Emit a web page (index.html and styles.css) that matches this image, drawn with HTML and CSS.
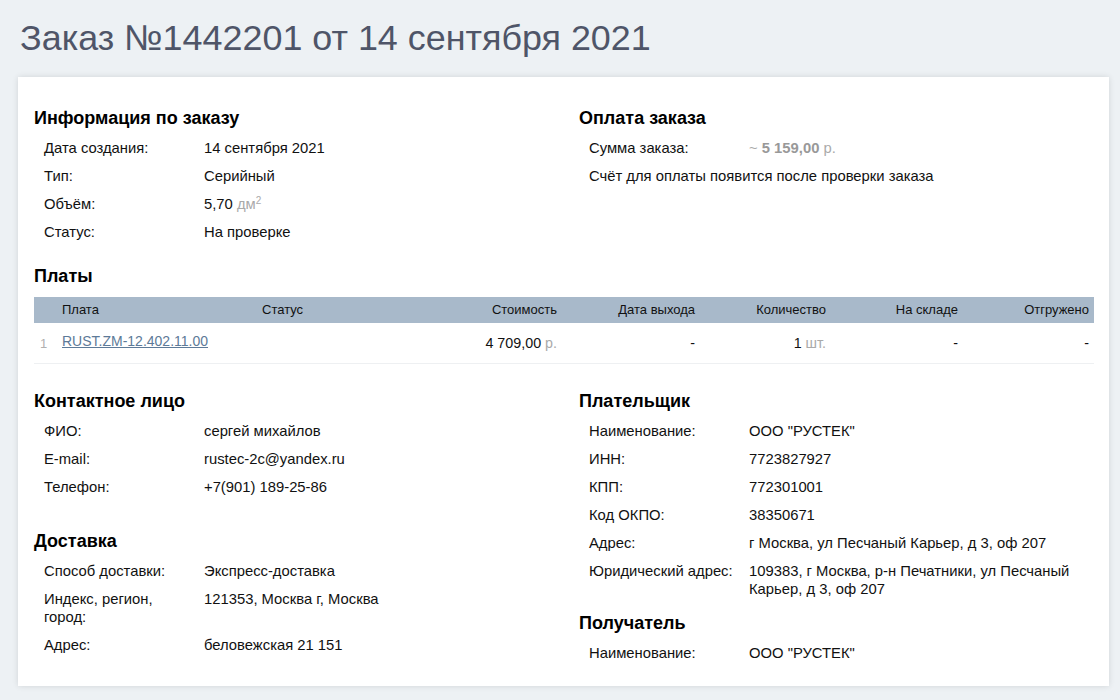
FILE: index.html
```html
<!DOCTYPE html>
<html lang="ru">
<head>
<meta charset="utf-8">
<title>Заказ №1442201</title>
<link rel="stylesheet" href="styles.css">
</head>
<body>
<h1 class="page-title">Заказ №1442201 от 14 сентября 2021</h1>
<div class="card">
  <div class="cols top-cols">
    <section class="section">
      <h2 class="sec-title">Информация по заказу</h2>
      <div class="row"><div class="lbl">Дата создания:</div><div class="val">14 сентября 2021</div></div>
      <div class="row"><div class="lbl">Тип:</div><div class="val">Серийный</div></div>
      <div class="row"><div class="lbl">Объём:</div><div class="val">5,70 <span class="muted">дм<sup class="sup">2</sup></span></div></div>
      <div class="row"><div class="lbl">Статус:</div><div class="val">На проверке</div></div>
    </section>
    <section class="section">
      <h2 class="sec-title">Оплата заказа</h2>
      <div class="row"><div class="lbl">Сумма заказа:</div><div class="val muted">~ <b>5 159,00</b> р.</div></div>
      <div class="row"><div class="note">Счёт для оплаты появится после проверки заказа</div></div>
    </section>
  </div>

  <section class="boards">
    <h2 class="sec-title">Платы</h2>
    <table class="tbl">
      <colgroup>
        <col class="c-num"><col class="c-name"><col class="c-status"><col class="c-cost"><col class="c-date"><col class="c-qty"><col class="c-stock"><col class="c-ship">
      </colgroup>
      <thead>
        <tr><th></th><th class="l">Плата</th><th class="l st">Статус</th><th>Стоимость</th><th>Дата выхода</th><th>Количество</th><th>На складе</th><th>Отгружено</th></tr>
      </thead>
      <tbody>
        <tr><td class="l num">1</td><td class="l"><a class="link" href="#">RUST.ZM-12.402.11.00</a></td><td></td><td>4 709,00 <span class="muted">р.</span></td><td>-</td><td>1 <span class="muted">шт.</span></td><td>-</td><td>-</td></tr>
      </tbody>
    </table>
  </section>

  <div class="cols bottom-cols">
    <div class="col">
      <section class="section">
        <h2 class="sec-title">Контактное лицо</h2>
        <div class="row"><div class="lbl">ФИО:</div><div class="val">сергей михайлов</div></div>
        <div class="row"><div class="lbl">E-mail:</div><div class="val">rustec-2c@yandex.ru</div></div>
        <div class="row"><div class="lbl">Телефон:</div><div class="val">+7(901) 189-25-86</div></div>
      </section>
      <section class="section delivery">
        <h2 class="sec-title">Доставка</h2>
        <div class="row"><div class="lbl">Способ доставки:</div><div class="val">Экспресс-доставка</div></div>
        <div class="row"><div class="lbl">Индекс, регион, город:</div><div class="val">121353, Москва г, Москва</div></div>
        <div class="row"><div class="lbl">Адрес:</div><div class="val">беловежская 21 151</div></div>
      </section>
    </div>
    <div class="col">
      <section class="section">
        <h2 class="sec-title">Плательщик</h2>
        <div class="row"><div class="lbl">Наименование:</div><div class="val">ООО "РУСТЕК"</div></div>
        <div class="row"><div class="lbl">ИНН:</div><div class="val">7723827927</div></div>
        <div class="row"><div class="lbl">КПП:</div><div class="val">772301001</div></div>
        <div class="row"><div class="lbl">Код ОКПО:</div><div class="val">38350671</div></div>
        <div class="row"><div class="lbl">Адрес:</div><div class="val">г Москва, ул Песчаный Карьер, д 3, оф 207</div></div>
        <div class="row"><div class="lbl">Юридический адрес:</div><div class="val">109383, г Москва, р-н Печатники, ул Песчаный Карьер, д 3, оф 207</div></div>
      </section>
      <section class="section recipient">
        <h2 class="sec-title">Получатель</h2>
        <div class="row"><div class="lbl">Наименование:</div><div class="val">ООО "РУСТЕК"</div></div>
      </section>
    </div>
  </div>
</div>
</body>
</html>
```

FILE: styles.css
```css
html, body {
  margin: 0;
  padding: 0;
}
body {
  background: #edf1f4;
  font-family: "Liberation Sans", Arial, sans-serif;
  color: #111;
  font-size: 14.8px;
}
.page-title {
  margin: 0;
  padding: 17px 0 0 20px;
  height: 61px;
  box-sizing: border-box;
  font-size: 35.9px;
  line-height: 42px;
  font-weight: normal;
  color: #4f5568;
}
.card {
  margin: 16px 11px 13px 18px;
  background: #fff;
  box-shadow: 0 0 6px rgba(0, 0, 0, 0.12);
  padding: 31px 15px 19px 16px;
}
.cols {
  display: grid;
  grid-template-columns: 1fr 1fr;
  column-gap: 30px;
}
.sec-title {
  margin: 0 0 6px 0;
  font-size: 18px;
  line-height: 20px;
  font-weight: bold;
  color: #000;
}
.row {
  display: flex;
  padding: 5px 0 5px 10px;
  line-height: 18px;
}
.lbl {
  width: 160px;
  flex: 0 0 160px;
  padding-right: 10px;
  box-sizing: border-box;
}
.val {
  flex: 1;
}
.note {
  flex: 1;
}
.muted {
  color: #aaa;
}
.val.muted b {
  color: #999;
}
.sup {
  font-size: 10px;
  line-height: 0;
  vertical-align: 5px;
}
.boards {
  margin-top: 20px;
}
.boards .sec-title {
  margin-bottom: 11px;
}
.tbl {
  width: 100%;
  border-collapse: collapse;
  table-layout: fixed;
  font-size: 13px;
}
.c-num { width: 22px; }
.c-name { width: 200px; }
.c-status { width: 176px; }
.c-cost { width: 130px; }
.c-date { width: 138px; }
.c-qty { width: 131px; }
.c-stock { width: 132px; }
.c-ship { width: 131px; }
.tbl th {
  background: #a8b9ca;
  font-weight: normal;
  color: #111;
  height: 26px;
  padding: 0 5px 0 6px;
  text-align: right;
  line-height: 26px;
}
.tbl td {
  height: 40px;
  padding: 0 5px 0 6px;
  text-align: right;
  border-bottom: 1px solid #eef0f2;
  font-size: 14.3px;
}
.tbl .l {
  text-align: left;
}
.tbl .st {
  padding-left: 6px;
}
.tbl td.num {
  color: #b0b0b0;
  font-size: 13px;
}
.link {
  color: #5d7a98;
  text-decoration: underline;
  font-size: 14px;
  position: relative;
  top: -2px;
}
.bottom-cols {
  margin-top: 27px;
}
.delivery {
  margin-top: 30px;
}
.recipient {
  margin-top: 10px;
}
```
